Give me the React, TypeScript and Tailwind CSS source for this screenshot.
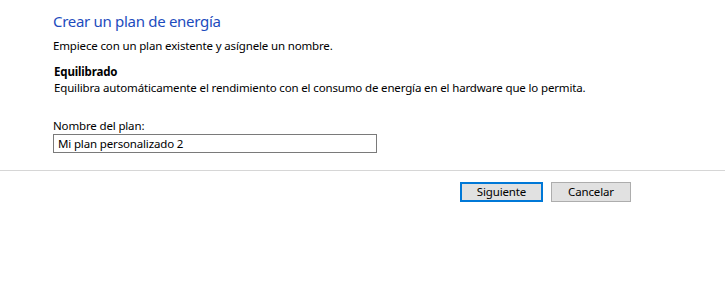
export default function App() {
  return (
    <div className="w-[725px] h-[295px] bg-white text-[11.5px] tracking-[-0.15px] text-black" style={{ fontFamily: '"Segoe UI", "Noto Sans", sans-serif' }}>
      <div className="pl-[53px] pt-[11px]">
        <h1 className="text-[15px] tracking-[-0.3px] leading-[20px] text-[#1d4cbd]">Crear un plan de energía</h1>
        <p className="mt-[7px] leading-[16px]">Empiece con un plan existente y asígnele un nombre.</p>
        <div className="mt-[10px] pl-px">
          <div className="font-bold leading-[16px]">Equilibrado</div>
          <div className="leading-[16px]">Equilibra automáticamente el rendimiento con el consumo de energía en el hardware que lo permita.</div>
        </div>
        <label className="block mt-[22px] leading-[16px]">Nombre del plan:</label>
        <div className="w-[324px] h-[19px] border border-[#7a7a7a] pl-[4px] leading-[17px]">Mi plan personalizado 2</div>
      </div>
      <div className="mt-[17px] h-px bg-[#d6d6d6]" />
      <div className="flex gap-[8px] pl-[460px] pt-[11px]">
        <button className="w-[83px] h-[20px] border-2 border-[#0078d7] bg-[#e1e1e1] leading-[16px]">Siguiente</button>
        <button className="w-[80px] h-[20px] border border-[#adadad] bg-[#e1e1e1] leading-[18px]">Cancelar</button>
      </div>
    </div>
  );
}
